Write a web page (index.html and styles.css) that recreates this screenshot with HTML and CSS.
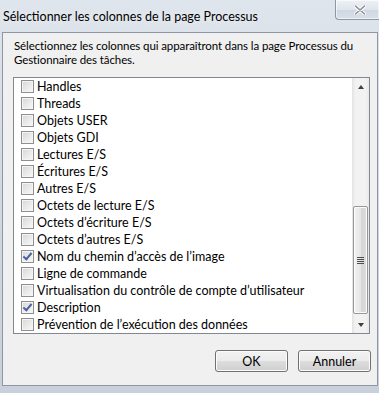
FILE: index.html
```html
<!DOCTYPE html>
<html lang="fr">
<head>
    <meta charset="UTF-8">
    <title>Sélectionner les colonnes de la page Processus</title>
    <link rel="stylesheet" href="styles.css">
</head>
<body>
    <div class="window">
        <div class="titlebar">
            <span class="title">Sélectionner les colonnes de la page Processus</span>
            <div class="close">
                <svg width="12" height="10" viewBox="0 0 12 10">
                    <path d="M1.5 1 L10.5 9 M10.5 1 L1.5 9" stroke="#fff" stroke-width="3.4" stroke-linecap="round"/>
                    <path d="M1.5 1 L10.5 9 M10.5 1 L1.5 9" stroke="#8a8f96" stroke-width="1.6" stroke-linecap="round"/>
                </svg>
            </div>
        </div>

        <div class="client">
            <p class="intro">Sélectionnez les colonnes qui apparaîtront dans la page Processus du<br>Gestionnaire des tâches.</p>

            <div class="listbox">
                <ul class="items">
                    <li><span class="check"></span>Handles</li>
                    <li><span class="check"></span>Threads</li>
                    <li><span class="check"></span>Objets USER</li>
                    <li><span class="check"></span>Objets GDI</li>
                    <li><span class="check"></span>Lectures E/S</li>
                    <li><span class="check"></span>Écritures E/S</li>
                    <li><span class="check"></span>Autres E/S</li>
                    <li><span class="check"></span>Octets de lecture E/S</li>
                    <li><span class="check"></span>Octets d’écriture E/S</li>
                    <li><span class="check"></span>Octets d’autres E/S</li>
                    <li><span class="check checked"></span>Nom du chemin d’accès de l’image</li>
                    <li><span class="check"></span>Ligne de commande</li>
                    <li><span class="check"></span>Virtualisation du contrôle de compte d’utilisateur</li>
                    <li><span class="check checked"></span>Description</li>
                    <li><span class="check"></span>Prévention de l’exécution des données</li>
                </ul>
                <div class="scrollbar">
                    <div class="arrow up"></div>
                    <div class="track">
                        <div class="thumb"><span class="grip"></span></div>
                    </div>
                    <div class="arrow down"></div>
                </div>
            </div>

            <div class="buttons">
                <button class="btn">OK</button>
                <button class="btn">Annuler</button>
            </div>
        </div>
        <div class="frame-bottom"></div>
    </div>
</body>
</html>
```

FILE: styles.css
```css
body {
    margin: 0;
    background: #c9d2dc;
    font-family: Lato, 'Noto Sans', sans-serif;
    font-size: 12px;
    color: #000;
}

.window {
    width: 379px;
    height: 393px;
    overflow: hidden;
    display: flex;
    flex-direction: column;
    background: linear-gradient(180deg, #dfe5ec 0%, #d2dae3 40%, #c8d1db 100%);
}

.titlebar {
    height: 32px;
    display: flex;
    align-items: flex-start;
    justify-content: space-between;
    flex-shrink: 0;
}

.title {
    margin: 9px 0 0 3px;
    font-size: 12.5px;
    color: #000;
    text-shadow: 0 0 8px rgba(255,255,255,0.9);
}

.close {
    width: 44px;
    height: 21px;
    margin-top: -1px;
    border: 1px solid #8e98a5;
    border-right: none;
    border-radius: 0 0 0 4px;
    background: linear-gradient(180deg, #eef2f6 0%, #dfe5ec 50%, #cfd7e0 51%, #d8dfe7 100%);
    box-shadow: inset 0 0 0 1px rgba(255,255,255,0.6);
    display: flex;
    align-items: center;
    justify-content: center;
    padding-left: 4px;
    box-sizing: border-box;
}

.client {
    margin-left: 2px;
    width: 376px;
    height: 354px;
    box-sizing: border-box;
    border: 1px solid #8d96a2;
    background: #f0f0f0;
    display: flex;
    flex-direction: column;
}

.intro {
    margin: 6px 0 0 11px;
    line-height: 14px;
    font-size: 11.5px;
    letter-spacing: -0.1px;
    white-space: nowrap;
}

.listbox {
    margin: 10px 0 0 10px;
    width: 357px;
    height: 257px;
    box-sizing: border-box;
    border: 1px solid #828790;
    background: #fff;
    display: flex;
}

.items {
    list-style: none;
    margin: 0;
    padding: 0;
    flex: 1;
    overflow: hidden;
}

.items li {
    height: 17px;
    display: flex;
    align-items: center;
    padding-left: 7px;
    white-space: nowrap;
    font-size: 12.5px;
}

.check {
    width: 13px;
    height: 13px;
    box-sizing: border-box;
    border: 1px solid #8f8f8f;
    background: linear-gradient(135deg, #d6d6d6 0%, #ececec 60%, #f8f8f8 100%);
    box-shadow: inset 0 0 0 1px #f4f4f4;
    margin-right: 3px;
    flex-shrink: 0;
    position: relative;
}

.check.checked::after {
    content: '';
    position: absolute;
    left: 3px;
    top: 0px;
    width: 3px;
    height: 7px;
    border-right: 2px solid #4b61a0;
    border-bottom: 2px solid #4b61a0;
    transform: rotate(40deg);
}

.scrollbar {
    width: 17px;
    display: flex;
    flex-direction: column;
    background: linear-gradient(90deg, #e3e3e3 0%, #f2f2f2 20%, #f2f2f2 80%, #e8e8e8 100%);
}

.arrow {
    height: 17px;
    display: flex;
    align-items: center;
    justify-content: center;
}

.arrow::before {
    content: '';
    border-left: 3px solid transparent;
    border-right: 3px solid transparent;
}

.arrow.up::before {
    border-bottom: 4px solid #404040;
}

.arrow.down::before {
    border-top: 4px solid #404040;
}

.track {
    flex: 1;
    display: flex;
    flex-direction: column;
    justify-content: flex-end;
    padding-bottom: 2px;
}

.thumb {
    height: 108px;
    margin: 0 1px;
    box-sizing: border-box;
    border: 1px solid #979797;
    border-radius: 2px;
    background: linear-gradient(90deg, #f3f3f3 0%, #e6e6e6 50%, #d6d6d6 51%, #dcdcdc 100%);
    box-shadow: inset 0 0 0 1px #fbfbfb;
    display: flex;
    align-items: center;
    justify-content: center;
}

.grip {
    width: 7px;
    height: 7px;
    background: repeating-linear-gradient(180deg, #4e4e4e 0, #4e4e4e 1px, transparent 1px, transparent 2px);
}

.buttons {
    display: flex;
    justify-content: flex-end;
    gap: 10px;
    margin: 16px 6px 0 0;
}

.btn {
    width: 73px;
    height: 22px;
    padding: 0;
    border: 1px solid #707070;
    border-radius: 3px;
    background: linear-gradient(180deg, #f2f2f2 0%, #ebebeb 50%, #dddddd 51%, #cfcfcf 100%);
    box-shadow: inset 0 0 0 1px #fcfcfc;
    font-family: inherit;
    font-size: 12.5px;
    color: #000;
}

.frame-bottom {
    flex: 1;
}
```
